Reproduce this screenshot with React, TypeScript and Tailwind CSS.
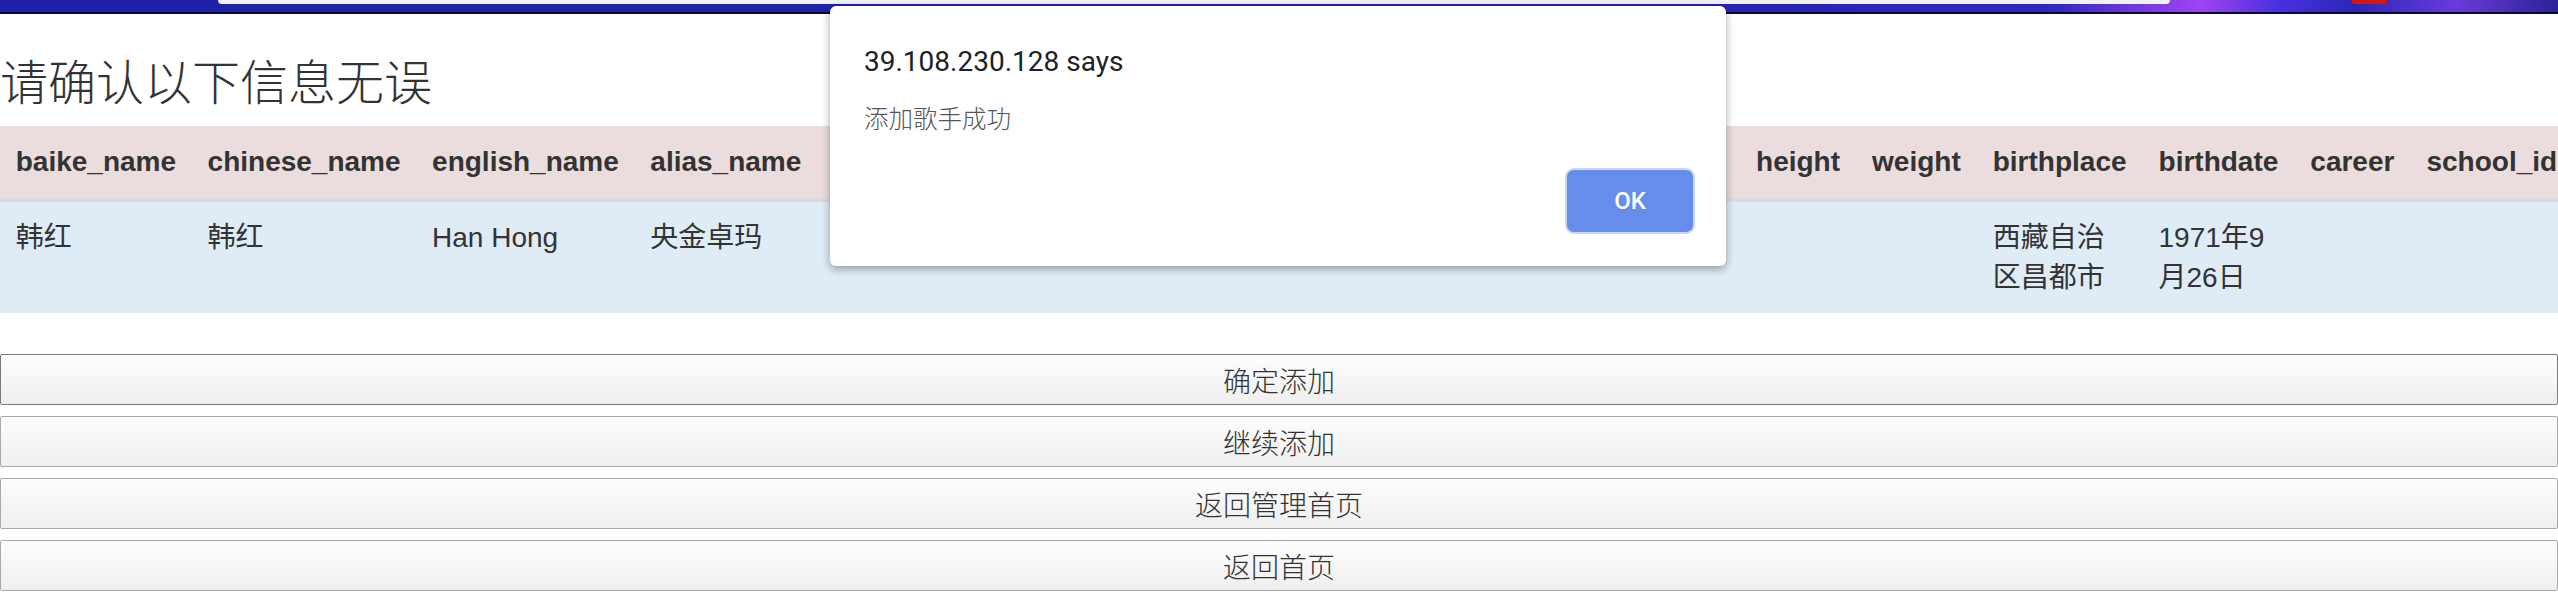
import React from "react";

const headers = [
  "baike_name",
  "chinese_name",
  "english_name",
  "alias_name",
];

// columns hidden under the alert box
const hiddenHeaders: { name: string; w: string }[] = [
  { name: "gender", w: "w-[110px]" },
  { name: "nationality", w: "w-[160px]" },
  { name: "nation", w: "w-[110px]" },
  { name: "constellation", w: "w-[200px]" },
  { name: "blood_type", w: "w-[185.5px]" },
];

const tailHeaders = [
  "height",
  "weight",
  "birthplace",
  "birthdate",
  "career",
  "school_id",
  "company_id",
  "introduction",
];

const row = ["韩红", "韩红", "Han Hong", "央金卓玛"];
const tailRow = ["", "", "西藏自治区昌都市", "1971年9月26日", "", "", "", ""];

const buttons = ["确定添加", "继续添加", "返回管理首页", "返回首页"];

const latin = "font-['Liberation_Sans','Noto_Sans_CJK_SC',sans-serif]";
const cjk = "font-['Noto_Sans_CJK_SC','Liberation_Sans',sans-serif]";

export default function App() {
  return (
    <div className="relative w-full min-h-screen overflow-hidden bg-white text-[#333]">
      {/* bottom edge of the browser chrome */}
      <div className="h-[14px] border-b-[2px] border-[#0a0a2a] bg-[linear-gradient(90deg,#1f22a8_0%,#2022ae_55%,#2e27c0_80%,#a044f0_86%,#4a30e0_89%,#2b26b8_92%,#6a3ad8_96%,#2a2398_100%)] flex items-start">
        <div className="w-[218px]" />
        <div className="w-[1952px] h-[4px] bg-[#f1f1f5] rounded-b-[12px]" />
        <div className="w-[182px]" />
        <div className="w-[35px] h-[4px] bg-[#d4170f] rounded-b-[3px]" />
      </div>

      <h1 className={`mt-[41px] text-[48px] leading-[48px] font-light ${cjk}`}>
        请确认以下信息无误
      </h1>

      <table className={`mt-[23px] border-collapse text-[28px] ${latin}`}>
        <thead>
          <tr className="bg-[#ebdddd]">
            {headers.map((h) => (
              <th key={h} className="px-[15.75px] pt-[16px] pb-[16px] leading-[40px] font-bold text-left whitespace-nowrap border-b-[4px] border-[#dcdcdc]">
                {h}
              </th>
            ))}
            {hiddenHeaders.map((h) => (
              <th key={h.name} className="px-[15.75px] pt-[16px] pb-[16px] leading-[40px] font-bold text-left border-b-[4px] border-[#dcdcdc]">
                <div className={h.w}>{h.name}</div>
              </th>
            ))}
            {tailHeaders.map((h) => (
              <th key={h} className="px-[16px] pt-[16px] pb-[16px] leading-[40px] font-bold text-left whitespace-nowrap border-b-[4px] border-[#dcdcdc]">
                {h}
              </th>
            ))}
          </tr>
        </thead>
        <tbody>
          <tr className="bg-[#dfebf5]">
            {row.map((c, i) => (
              <td key={i} className="px-[15.75px] pt-[16px] pb-[15px] leading-[40px] align-top">
                {c}
              </td>
            ))}
            {hiddenHeaders.map((h) => (
              <td key={h.name} className="px-[15.75px] pt-[16px] pb-[15px] leading-[40px] align-top" />
            ))}
            {tailRow.map((c, i) => (
              <td key={i} className="px-[16px] pt-[16px] pb-[15px] leading-[40px] align-top">
                {c}
              </td>
            ))}
          </tr>
        </tbody>
      </table>

      <div className="mt-[41px] flex flex-col gap-[11px]">
        {buttons.map((b, i) => (
          <button
            key={b}
            type="button"
            className={`w-full h-[51px] rounded-[2px] border ${
              i === 0 ? "border-[#7a7a7a]" : "border-[#a9a9a9]"
            } bg-[linear-gradient(180deg,#fdfdfd,#efefef)] text-[28px] leading-none font-light text-[#333] ${cjk}`}
          >
            {b}
          </button>
        ))}
      </div>

      {/* alert box */}
      <div className="absolute left-[830px] top-[6px] w-[896px] h-[260px] bg-white rounded-[6px] shadow-[0_3px_8px_rgba(0,0,0,0.35)] flex flex-col pt-[39px] pl-[34px] pr-[31px] pb-[32px]">
        <div className="text-[28px] leading-[34px] text-[#202124] font-['Roboto','Noto_Sans',sans-serif]">
          39.108.230.128 says
        </div>
        <div className={`mt-[24px] text-[24.5px] leading-[30px] text-[#555] font-light ${cjk}`}>
          添加歌手成功
        </div>
        <div className="mt-auto flex justify-end">
          <button
            type="button"
            className="w-[130px] h-[66px] rounded-[9px] border-2 border-[#c8d6f8] bg-[#668de9] text-white text-[24px] font-medium font-['Roboto','Noto_Sans',sans-serif]"
          >
            OK
          </button>
        </div>
      </div>
    </div>
  );
}
